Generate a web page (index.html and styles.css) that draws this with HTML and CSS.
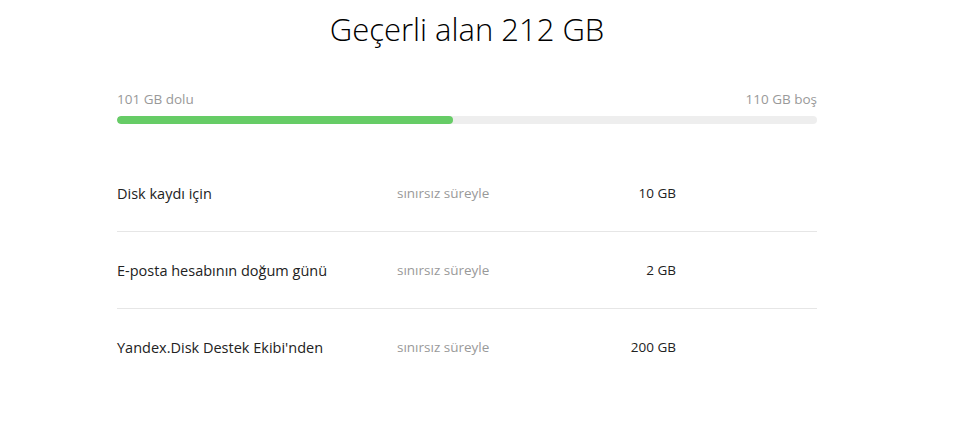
FILE: index.html
```html
<!DOCTYPE html>
<html lang="tr">
<head>
    <meta charset="UTF-8">
    <title>Disk alanı</title>
    <link rel="stylesheet" href="styles.css">
</head>
<body>
    <div class="space">
        <h1 class="space-title">Geçerli alan 212 GB</h1>

        <div class="usage">
            <div class="usage-labels">
                <span>101 GB dolu</span>
                <span>110 GB boş</span>
            </div>
            <div class="usage-bar">
                <div class="usage-fill" style="width: 48%;"></div>
            </div>
        </div>

        <!-- Space sources -->
        <div class="sources">
            <div class="source">
                <span class="source-name">Disk kaydı için</span>
                <span class="source-term">sınırsız süreyle</span>
                <span class="source-size">10 GB</span>
            </div>
            <div class="source">
                <span class="source-name">E-posta hesabının doğum günü</span>
                <span class="source-term">sınırsız süreyle</span>
                <span class="source-size">2 GB</span>
            </div>
            <div class="source">
                <span class="source-name">Yandex.Disk Destek Ekibi'nden</span>
                <span class="source-term">sınırsız süreyle</span>
                <span class="source-size">200 GB</span>
            </div>
        </div>
    </div>
</body>
</html>
```

FILE: styles.css
```css
body {
    margin: 0;
    background-color: #fff;
    font-family: "Open Sans", Arial, sans-serif;
    color: #222;
}
.space {
    width: 700px;
    margin-left: 117px;
}
.space-title {
    margin: 0;
    padding-top: 11px;
    font-size: 31px;
    font-weight: 300;
    line-height: 36px;
    text-align: center;
    color: #000;
}
.usage {
    margin-top: 43px;
}
.usage-labels {
    display: flex;
    justify-content: space-between;
    font-size: 13.5px;
    line-height: 18px;
    color: #999;
}
.usage-bar {
    margin-top: 8px;
    height: 8px;
    border-radius: 4px;
    background-color: #eee;
    overflow: hidden;
}
.usage-fill {
    height: 100%;
    border-radius: 4px;
    background-color: #66cc66;
}
.sources {
    margin-top: 31px;
}
.source {
    display: flex;
    align-items: center;
    height: 76px;
    font-size: 14.5px;
    border-bottom: 1px solid #e6e6e6;
}
.source:last-child {
    border-bottom: none;
}
.source-name {
    width: 280px;
}
.source-term {
    width: 130px;
    font-size: 13.5px;
    color: #999;
}
.source-size {
    width: 149px;
    font-size: 13.5px;
    text-align: right;
}
```
